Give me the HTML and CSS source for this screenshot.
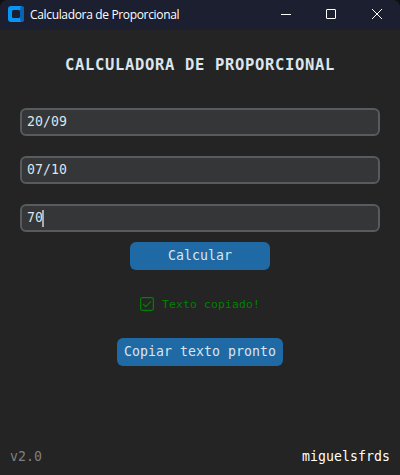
FILE: index.html
```html
<!DOCTYPE html>
<html lang="pt-BR">
<head>
<meta charset="utf-8">
<title>Calculadora de Proporcional</title>
<link rel="stylesheet" href="styles.css">
</head>
<body>
<div class="window">
  <header class="titlebar">
    <svg class="logo" width="16" height="16" viewBox="0 0 16 16">
      <rect width="16" height="16" rx="3" fill="#0796f5"/>
      <path d="M13 0a3 3 0 0 1 3 3v10a3 3 0 0 1-3 3l-1-3V3z" fill="#0864b0"/>
      <rect x="4" y="4" width="8" height="8" rx="1.5" fill="#1b1f30"/>
    </svg>
    <span class="name">Calculadora de Proporcional</span>
    <div class="controls">
      <svg width="11" height="10" viewBox="0 0 11 10"><path d="M1 5.5h10"/></svg>
      <svg width="10" height="10" viewBox="0 0 10 10"><rect x=".5" y=".5" width="9" height="9" rx=".5"/></svg>
      <svg width="10" height="10" viewBox="0 0 10 10"><path d="M0 0l10 10M10 0L0 10"/></svg>
    </div>
  </header>
  <main class="content">
    <h1>CALCULADORA DE PROPORCIONAL</h1>
    <div class="fields">
      <div class="field">20/09</div>
      <div class="field">07/10</div>
      <div class="field">70<span class="caret"></span></div>
    </div>
    <button class="btn calc">Calcular</button>
    <div class="status">
      <svg width="14" height="14" viewBox="0 0 14 14"><rect x=".6" y=".6" width="12.8" height="12.8" rx="1.8"/><path d="M3 7l2.8 2.7L11 4.4"/></svg>
      <span>Texto copiado!</span>
    </div>
    <button class="btn copy">Copiar texto pronto</button>
  </main>
  <footer class="footer">
    <span class="version">v2.0</span>
    <span>miguelsfrds</span>
  </footer>
</div>
</body>
</html>
```
FILE: styles.css
```css
* { box-sizing: border-box; }
body { margin: 0; background: #101010; }
.window {
  width: 400px;
  height: 475px;
  display: flex;
  flex-direction: column;
  overflow: hidden;
  border-radius: 8px 8px 0 0;
  background: #242424;
  color: #dce4ee;
  font: 13.2px/16px "DejaVu Sans Mono", monospace;
  letter-spacing: 0.053px;
}
.titlebar {
  height: 30px;
  flex: none;
  display: flex;
  align-items: center;
  padding: 0 18px 0 8px;
  background: #1b1f30;
  color: #fff;
}
.logo { margin-top: -2px; }
.name {
  margin-left: 6px;
  font: 12px/16px "Open Sans", sans-serif;
  letter-spacing: -0.34px;
}
.controls {
  display: flex;
  gap: 36px;
  margin: -2px 0 0 auto;
  fill: none;
  stroke: #fff;
}
.controls svg { display: block; }
.controls svg:first-child { margin-right: -1px; }
.content {
  display: flex;
  flex-direction: column;
  align-items: center;
}
h1 {
  margin: 24px 0 0;
  font-size: 15.5px;
  line-height: 22px;
  letter-spacing: 0.67px;
}
.fields {
  width: 360px;
  margin-top: 32px;
  display: grid;
  gap: 20px;
}
.field {
  height: 28px;
  display: flex;
  align-items: center;
  padding: 0 5px;
  border: 2px solid #565b5e;
  border-radius: 6px;
  background: #343638;
}
.caret { width: 2px; height: 17px; margin-left: -1px; background: #a8adb3; }
.btn {
  height: 28px;
  padding: 0;
  border: 0;
  border-radius: 6px;
  background: #1f6aa5;
  color: #dce4ee;
  font: inherit;
  letter-spacing: inherit;
}
.calc { width: 140px; margin-top: 10px; }
.status {
  display: flex;
  align-items: center;
  gap: 8px;
  height: 28px;
  margin-top: 20px;
  color: #008000;
  font-size: 11.3px;
  letter-spacing: 0.197px;
}
.status svg { fill: none; stroke: currentColor; stroke-width: 1.2; }
.status span { padding-top: 2px; }
.copy { width: 166px; margin-top: 20px; }
.footer {
  display: flex;
  justify-content: space-between;
  margin-top: auto;
  padding: 0 10px 10px;
  color: #fff;
}
.version { color: #808080; }
```
